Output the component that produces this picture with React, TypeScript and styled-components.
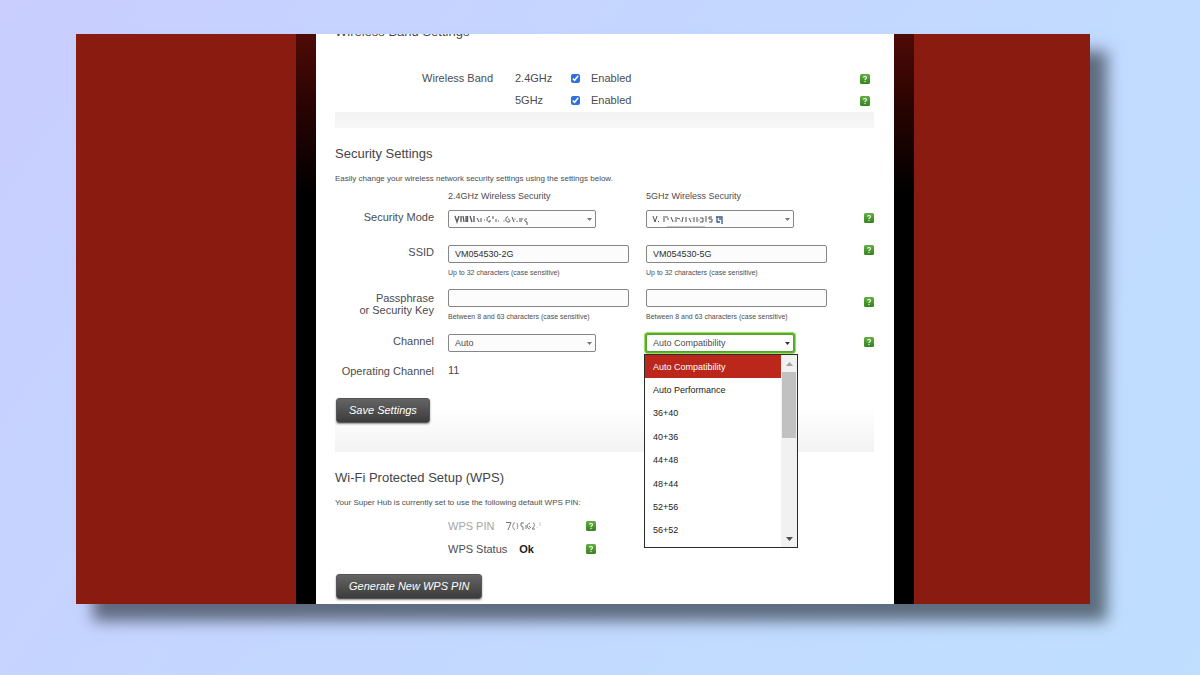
import React, { useState } from "react";
import styled, { createGlobalStyle, css } from "styled-components";

const GlobalStyle = createGlobalStyle`
  * { box-sizing: border-box; }
  html { min-height: 100%; background: linear-gradient(125deg, #c9ceff 0%, #c4d6ff 40%, #bfdfff 100%); }
  body { margin: 0; font-family: "Liberation Sans", Arial, sans-serif; font-size: 11px; line-height: 12px; color: #4c4c50; }
  button, input, select { font: inherit; color: inherit; margin: 0; }
`;

const Backdrop = styled.div`
  display: flex;
  padding: 34px 110px 71px 76px;
`;

const Screen = styled.div`
  flex: 1;
  display: grid;
  grid-template-columns: 5fr 618px 4fr;
  overflow: hidden;
  background: #8a1b10;
  box-shadow: 17px 17px 14px rgba(12, 18, 24, 0.55);
`;

const Column = styled.main`
  grid-column: 2;
  padding: 0 20px;
  background: linear-gradient(#4e0b06 0, #2a0402 70px, #000 160px);
`;

const Page = styled.div`
  display: flow-root;
  padding: 0 20px 5px 19px;
  background: #fff;
`;

const Section = styled.section<{ $pull?: boolean; $fade?: number }>`
  margin-top: ${(p) => (p.$pull ? "-10px" : "18px")};
  padding-bottom: ${(p) => p.$fade || 0}px;
  ${(p) =>
    p.$fade &&
    css`
      background: linear-gradient(#fff, #f3f3f3) bottom / 100% 44px no-repeat;
    `}
`;

const Strip = styled.div`
  height: 16px;
  margin-top: 1px;
  background: linear-gradient(#f2f2f2, #f7f7f7);
`;

const Title = styled.h2`
  margin: 0;
  font-size: 13px;
  line-height: 16px;
  font-weight: 400;
  color: #444448;
`;

const Note = styled.p`
  margin: 11px 0 0;
  font-size: 8px;
  line-height: 12px;
`;

const BandRows = styled.div`
  margin-top: 27px;
`;

const BandRow = styled.div`
  display: grid;
  grid-template-columns: 158px 56px 1fr 14px;
  column-gap: 11px;
  align-items: center;
  height: 22px;
`;

const RowName = styled.span`
  text-align: right;
`;

const BandName = styled.span`
  padding-left: 11px;
`;

const TickLabel = styled.label`
  display: flex;
  align-items: center;
  gap: 11px;
`;

const Tick = styled.input`
  width: 9px;
  height: 9px;
  position: relative;
  accent-color: #2f6fe0;
`;

const FormRow = styled.div<{ $after?: number }>`
  display: grid;
  grid-template-columns: 99px 184px 1fr 10px;
  column-gap: 14px;
  align-items: start;
  padding-bottom: ${(p) => p.$after || 0}px;
`;

const FormLabel = styled.span<{ $lines?: number }>`
  padding-top: ${(p) => (p.$lines === 2 ? 3 : 1)}px;
  text-align: right;
  white-space: nowrap;
`;

const ColumnHead = styled.span`
  font-size: 9px;
  padding: 5px 0 8px;
`;

const Cell = styled.div`
  position: relative;
  display: flex;
  flex-direction: column;
  align-items: flex-start;
`;

const fieldFrame = css`
  height: 18px;
  padding: 0 6px;
  border: 1px solid #85858a;
  border-radius: 2px;
  background: #fcfcfc;
  font-size: 9px;
  outline: none;
`;

const TextBox = styled.input`
  ${fieldFrame}
  width: 181px;
  color: #2e2e32;
`;

const Picker = styled.select<{ $open?: boolean }>`
  ${fieldFrame}
  width: 148px;
  appearance: none;
  ${(p) =>
    p.$open &&
    css`
      border-color: #55a032;
      background: #fff;
      box-shadow: 0 0 0 1px #5cae34, 0 0 1px 2px #8fdc4c;
    `}
`;

const Caret = styled.svg<{ $dark?: boolean }>`
  position: absolute;
  left: 139px;
  top: 8px;
  width: 5px;
  height: 3px;
  fill: ${(p) => (p.$dark ? "#333" : "#77777c")};
  pointer-events: none;
`;

const Smudge = styled.svg`
  position: absolute;
  left: 6px;
  top: 4px;
  pointer-events: none;
`;

const Hint = styled.span`
  margin-top: 5px;
  font-size: 7px;
  line-height: 10px;
`;

const Value = styled.output``;

const HelpButton = styled.button<{ $top?: number }>`
  display: block;
  width: 10px;
  height: 10px;
  margin-top: ${(p) => p.$top || 0}px;
  padding: 0;
  border: 0;
  background: none;
`;

const ActionButton = styled.button`
  display: block;
  height: 25px;
  margin-left: 1px;
  padding: 0 12px 2px;
  border: 1px solid #55555a;
  border-radius: 3px;
  background: linear-gradient(#646464, #3c3c3c);
  box-shadow: 0 1px 2px rgba(0, 0, 0, 0.45);
  font-style: italic;
  color: #fff;
`;

const ListBox = styled.div`
  position: absolute;
  z-index: 2;
  left: -2px;
  top: 20px;
  display: flex;
  width: 154px;
  height: 194px;
  border: 1px solid #2b2b2b;
  background: #fff;
`;

const Options = styled.ul`
  flex: 1;
  display: grid;
  grid-auto-rows: 1fr;
  margin: 0;
  padding: 0 0 5px;
  list-style: none;
`;

const Option = styled.li<{ $on?: boolean }>`
  display: flex;
  align-items: center;
  padding-left: 8px;
  font-size: 9px;
  color: ${(p) => (p.$on ? "#fff" : "#222")};
  background: ${(p) => (p.$on ? "#bb271a" : "transparent")};
`;

const ScrollTrack = styled.div`
  display: flex;
  flex-direction: column;
  align-items: center;
  width: 16px;
  padding: 7px 0 6px;
  background: #f1f1f1;
`;

const Thumb = styled.div`
  width: 14px;
  height: 66px;
  margin: 6px 0 auto;
  background: #c1c1c1;
`;

const WpsRows = styled.div`
  padding: 5px 0 14px;
`;

const WpsRow = styled.div`
  display: grid;
  grid-template-columns: 138px 10px;
  align-items: center;
  height: 23px;
  padding-left: 113px;
`;

const WpsText = styled.div<{ $muted?: boolean }>`
  display: flex;
  align-items: center;
  gap: 12px;
  color: ${(p) => (p.$muted ? "#a5a5a8" : "inherit")};
`;

const Strong = styled.strong`
  color: #222;
`;

const Help = ({ about, top }: { about: string; top?: number }) => (
  <HelpButton type="button" aria-label={"Help: " + about} $top={top}>
    <svg width="10" height="10" viewBox="0 0 10 10" display="block">
      <defs>
        <linearGradient id="leaf" x1="0" y1="0" x2="0" y2="1">
          <stop offset="0" stopColor="#63ad45" />
          <stop offset="1" stopColor="#35841f" />
        </linearGradient>
      </defs>
      <rect width="10" height="10" rx="1.5" fill="url(#leaf)" />
      <path d="M3.5 3.6C3.6 2 6.6 2 6.5 3.7C6.4 4.7 5 4.7 5 5.9" fill="none" stroke="#e9f7df" strokeWidth="1.2" />
      <rect x="4.4" y="6.9" width="1.2" height="1.2" fill="#e9f7df" />
    </svg>
  </HelpButton>
);

const Arrow = ({ dark }: { dark?: boolean }) => (
  <Caret $dark={dark} viewBox="0 0 5 3">
    <path d="M0 0H5L2.5 3Z" />
  </Caret>
);

const channels = ["Auto Compatibility", "Auto Performance", "36+40", "40+36", "44+48", "48+44", "52+56", "56+52"];
const bands = ["2.4GHz", "5GHz"];

export default function App() {
  const [channel, setChannel] = useState(channels[0]);
  const [enabled, setEnabled] = useState([true, true]);
  return (
    <>
      <GlobalStyle />
      <Backdrop>
        <Screen>
          <Column>
            <Page>
              <Section $pull>
                <Title>Wireless Band Settings</Title>
                <BandRows>
                  {bands.map((band, i) => (
                    <BandRow key={band}>
                      <RowName>{i === 0 && "Wireless Band"}</RowName>
                      <BandName>{band}</BandName>
                      <TickLabel>
                        <Tick
                          type="checkbox"
                          checked={enabled[i]}
                          onChange={() => setEnabled(enabled.map((on, n) => (n === i ? !on : on)))}
                        />
                        Enabled
                      </TickLabel>
                      <Help about={band} top={2} />
                    </BandRow>
                  ))}
                </BandRows>
                <Strip />
              </Section>

              <Section $fade={29}>
                <Title>Security Settings</Title>
                <Note>Easily change your wireless network security settings using the settings below.</Note>
                <FormRow>
                  <span />
                  <ColumnHead>2.4GHz Wireless Security</ColumnHead>
                  <ColumnHead>5GHz Wireless Security</ColumnHead>
                </FormRow>
                <FormRow $after={17}>
                  <FormLabel>Security Mode</FormLabel>
                  <Cell>
                    <Picker aria-label="2.4GHz security mode" />
                    <Smudge width="74" height="12" viewBox="0 0 74 12" fill="none" stroke="#55555a">
                      <path d="M1 2l2 6 2-6M7 2v6M9 2l1 6M12 2v6M13.500 2v6M16 2l2 6M20 2v6" strokeWidth="1.3" />
                      <path d="M23 4l2 4M27 4v4M30 6h1M36 2.500c-4 0-4 5.500 0 5.500v-2M39 2v3M42 5v3M44 7h1M54 2.500c-3 1-3 5 0 5.500s2-3 0-3M58 3l2 5M63 7v1M65 5h4M65 7h3M73 5c-3-1-3 3 0 3v3" />
                      <path d="M33 3v4M49 7h2M61 4v2" stroke="#a5a5a8" />
                    </Smudge>
                    <Arrow />
                  </Cell>
                  <Cell>
                    <Picker aria-label="5GHz security mode" />
                    <Smudge width="78" height="13" viewBox="0 0 78 13" fill="none" stroke="#55555a">
                      <path d="M1 2l2 6 2-6M6 7l1 1M12 2v6M13 3h3M15 5h2M19 3l2 5M24 3v5M25 4l3 1M31 3l-1 5M34 3v5M37 4l2 4M42 3v5M45 3v5M48 4h3v4h-3M54 2v6M60 3h-3v2h3v3h-3" />
                      <path d="M22 7h2M28 7h1M40 4v1M46 6h2" stroke="#a5a5a8" />
                      <path d="M64 3h6v7M65 3v5h3M67 5h2" stroke="#34598f" strokeWidth="1.3" />
                      <path d="M15 12.500h38" stroke="#c5c5c8" />
                    </Smudge>
                    <Arrow />
                  </Cell>
                  <Help about="Security Mode" top={3} />
                </FormRow>
                <FormRow $after={11}>
                  <FormLabel>SSID</FormLabel>
                  <Cell>
                    <TextBox aria-label="2.4GHz SSID" defaultValue="VM054530-2G" />
                    <Hint>Up to 32 characters (case sensitive)</Hint>
                  </Cell>
                  <Cell>
                    <TextBox aria-label="5GHz SSID" defaultValue="VM054530-5G" />
                    <Hint>Up to 32 characters (case sensitive)</Hint>
                  </Cell>
                  <Help about="SSID" />
                </FormRow>
                <FormRow $after={12}>
                  <FormLabel $lines={2}>
                    Passphrase
                    <br />
                    or Security Key
                  </FormLabel>
                  <Cell>
                    <TextBox aria-label="2.4GHz passphrase" />
                    <Hint>Between 8 and 63 characters (case sensitive)</Hint>
                  </Cell>
                  <Cell>
                    <TextBox aria-label="5GHz passphrase" />
                    <Hint>Between 8 and 63 characters (case sensitive)</Hint>
                  </Cell>
                  <Help about="Passphrase" top={8} />
                </FormRow>
                <FormRow $after={12}>
                  <FormLabel>Channel</FormLabel>
                  <Cell>
                    <Picker aria-label="2.4GHz channel">
                      <option>Auto</option>
                    </Picker>
                    <Arrow />
                  </Cell>
                  <Cell>
                    <Picker $open aria-label="5GHz channel" value={channel} onChange={(e) => setChannel(e.target.value)}>
                      {channels.map((name) => (
                        <option key={name}>{name}</option>
                      ))}
                    </Picker>
                    <Arrow dark />
                    <ListBox>
                      <Options role="listbox" aria-label="5GHz channels">
                        {channels.map((name) => (
                          <Option
                            key={name}
                            role="option"
                            aria-selected={name === channel}
                            $on={name === channel}
                            onClick={() => setChannel(name)}
                          >
                            {name}
                          </Option>
                        ))}
                      </Options>
                      <ScrollTrack>
                        <svg width="7" height="4" viewBox="0 0 7 4" fill="#a3a3a3">
                          <path d="M0 4H7L3.500 0Z" />
                        </svg>
                        <Thumb />
                        <svg width="7" height="4" viewBox="0 0 7 4" fill="#505050">
                          <path d="M0 0H7L3.500 4Z" />
                        </svg>
                      </ScrollTrack>
                    </ListBox>
                  </Cell>
                  <Help about="Channel" top={3} />
                </FormRow>
                <FormRow $after={21}>
                  <FormLabel>Operating Channel</FormLabel>
                  <Value>11</Value>
                </FormRow>
                <ActionButton type="button">Save Settings</ActionButton>
              </Section>

              <Section>
                <Title>Wi-Fi Protected Setup (WPS)</Title>
                <Note>Your Super Hub is currently set to use the following default WPS PIN:</Note>
                <WpsRows>
                  <WpsRow>
                    <WpsText $muted>
                      WPS PIN
                      <svg width="36" height="10" viewBox="0 0 36 10" fill="none" stroke="#77777c">
                        <path d="M0 1.500h5L2 9" />
                        <path d="M9 1.500c-3 1-3 7 0 7M11 2c1 2 1 4 0 6" stroke="#a08080" />
                        <path d="M18 2h-3v3l2 1v3M20 4v4M24 2c-4 1-3 6 0 6M23 5l2 2M27 2c3 1 1 4-1 6h3" />
                        <path d="M31 6v1M34 1v4" stroke="#c9c9cc" />
                      </svg>
                    </WpsText>
                    <Help about="WPS PIN" />
                  </WpsRow>
                  <WpsRow>
                    <WpsText>
                      WPS Status <Strong>Ok</Strong>
                    </WpsText>
                    <Help about="WPS Status" />
                  </WpsRow>
                </WpsRows>
                <ActionButton type="button">Generate New WPS PIN</ActionButton>
              </Section>
            </Page>
          </Column>
        </Screen>
      </Backdrop>
    </>
  );
}
